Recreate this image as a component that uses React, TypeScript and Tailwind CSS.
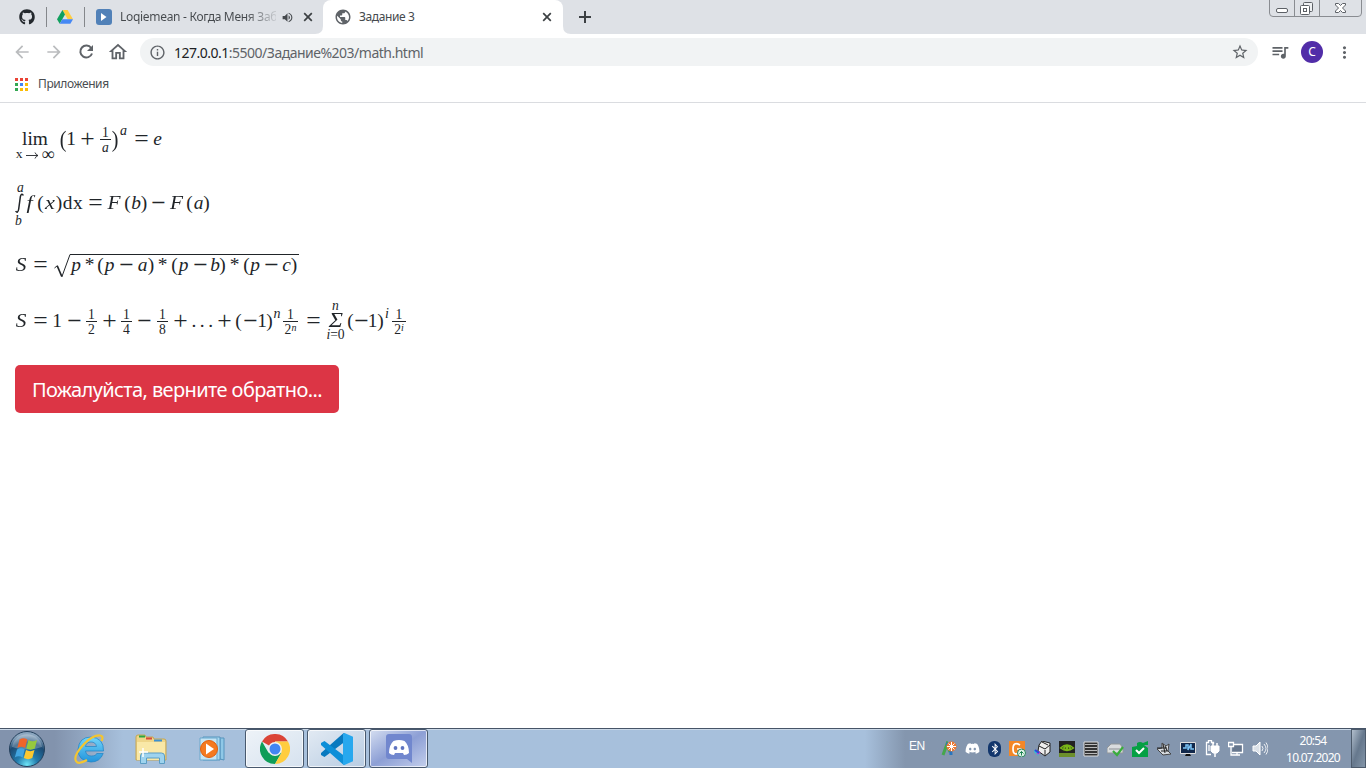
import React from "react";
import {
  MdArrowBack,
  MdArrowForward,
  MdOutlineHome,
  MdInfoOutline,
  MdStarBorder,
  MdQueueMusic,
  MdMoreVert,
  MdPublic,
  MdVolumeUp,
} from "react-icons/md";
import { FaGithub, FaDiscord, FaBluetoothB } from "react-icons/fa";

type CellProps = { c: string; children?: React.ReactNode };

/* ---------- Browser chrome ---------- */

function DriveLogo() {
  return (
    <svg width="16" height="14" viewBox="0 0 16 14">
      <path d="M5.4 0h5.2L16 9.2h-5.3z" fill="#ffcd40" />
      <path d="M5.4 0L8 4.6 2.7 13.8 0 9.2z" fill="#11a05e" />
      <path d="M5.3 9.2H16l-2.6 4.6H2.7z" fill="#4688f4" />
    </svg>
  );
}

function CloseIcon({ c }: CellProps) {
  return (
    <svg className={"shrink-0 " + c} width="14" height="14" viewBox="0 0 14 14" fill="none" stroke="#3c4043" strokeWidth="1.700">
      <path d="M3.200 3.200l7.600 7.600M10.800 3.200l-7.600 7.600" />
    </svg>
  );
}

function WindowButtons() {
  return (
    <svg className="ml-auto mr-[4px] self-start" width="93" height="17" viewBox="0 0 93 17" fill="none">
      <path d="M.5 0v13q0 3.500 3.500 3.500h85q3.500 0 3.500-3.500V0M25.500 0v16.500M50.500 0v16.500" stroke="#898c91" />
      <rect x="7.500" y="8.500" width="11" height="4" rx="1.500" fill="#fff" stroke="#5c6066" />
      <rect x="34.500" y="2.500" width="9" height="9" rx="1" fill="#eef0f2" stroke="#5c6066" />
      <rect x="31.500" y="5.500" width="9" height="9" rx="1" fill="#fff" stroke="#5c6066" />
      <rect x="34.500" y="8.500" width="3" height="3" stroke="#5c6066" />
      <path
        d="M66.500 3.500h3l2 2 2-2h3v1.500l-3 3 3 3v1.500h-3l-2-2-2 2h-3V11l3-3-3-3z"
        fill="#fff"
        stroke="#5c6066"
      />
    </svg>
  );
}

function TabStrip() {
  return (
    <div className="flex h-[34px] items-center bg-[#dee1e6] text-[12px] text-[#45494d]">
      <FaGithub className="ml-[19px] size-[16px] shrink-0 text-[#24292e]" />
      <div className="ml-[11px] h-[20px] w-px bg-[#84878b]" />
      <div className="ml-[10px]">
        <DriveLogo />
      </div>
      <div className="ml-[11px] h-[20px] w-px bg-[#84878b]" />
      <div className="ml-[11px] flex size-[16px] shrink-0 items-center justify-center rounded-[3px] bg-[#5181b8]">
        <svg width="6" height="8" viewBox="0 0 6 8">
          <path d="M0 0l5.500 4L0 8z" fill="#fff" />
        </svg>
      </div>
      <div className="ml-[8px] w-[156px] shrink-0 bg-linear-to-r from-[#45494d] from-80% to-[#45494d22] bg-clip-text tracking-[-0.3px] whitespace-nowrap text-transparent">
        Loqiemean - Когда Меня Заб
      </div>
      <MdVolumeUp className="ml-[5px] size-[13px] shrink-0" />
      <CloseIcon c="ml-[7px]" />
      <svg className="shrink-0 self-end" width="8" height="8" viewBox="0 0 8 8">
        <path d="M8 0v8H0q8 0 8-8z" fill="#fff" />
      </svg>
      <div className="flex h-[34px] w-[240px] shrink-0 items-center rounded-t-[8px] bg-white">
        <MdPublic className="ml-[11px] size-[18px] text-[#5f6368]" />
        <span className="ml-[7px] tracking-[-0.4px]">Задание 3</span>
        <CloseIcon c="ml-auto mr-[9px]" />
      </div>
      <svg className="shrink-0 self-end" width="8" height="8" viewBox="0 0 8 8">
        <path d="M0 0v8h8Q0 8 0 0z" fill="#fff" />
      </svg>
      <svg className="ml-[8px] shrink-0" width="12" height="12" viewBox="0 0 12 12" stroke="#3c4043" strokeWidth="2">
        <path d="M6 0v12M0 6h12" />
      </svg>
      <WindowButtons />
    </div>
  );
}

function Toolbar() {
  return (
    <div className="flex h-[36px] items-center text-[#5f6368]">
      <MdArrowBack className="ml-[12px] size-[20px] text-[#babcbe]" />
      <MdArrowForward className="ml-[12px] size-[20px] text-[#babcbe]" />
      <svg className="ml-[12px]" width="20" height="20" viewBox="0 0 20 20" fill="none">
        <path d="M15.200 6A6 6 0 1 0 16 11.500" stroke="#5f6368" strokeWidth="2" />
        <path d="M17 3v6h-6z" fill="#5f6368" />
      </svg>
      <MdOutlineHome className="ml-[11px] size-[22px]" />
      <div className="ml-[11px] flex h-[28px] w-[1118px] items-center rounded-full bg-[#f1f3f4]">
        <MdInfoOutline className="ml-[9px] size-[17px]" />
        <span className="ml-[8px] text-[14px] tracking-[-0.5px] whitespace-nowrap">
          <span className="text-[#202124]">127.0.0.1</span>:5500/Задание%203/math.html
        </span>
        <MdStarBorder className="ml-auto mr-[9px] size-[18px]" />
      </div>
      <MdQueueMusic className="ml-[12px] size-[20px]" />
      <div className="ml-[11px] flex size-[22px] items-center justify-center rounded-full bg-[#512da8] text-[12px] text-white">
        C
      </div>
      <MdMoreVert className="ml-[12px] size-[19px]" />
    </div>
  );
}

function AppsGrid() {
  const colors = ["#ea4335", "#ea4335", "#ea4335", "#34a853", "#4285f4", "#fbbc05", "#34a853", "#fbbc05", "#fbbc05"];
  return (
    <svg width="13" height="13" viewBox="0 0 13 13">
      {colors.map((color, i) => (
        <rect key={i} x={(i % 3) * 5} y={Math.floor(i / 3) * 5} width="3" height="3" fill={color} />
      ))}
    </svg>
  );
}

/* ---------- Formulas ---------- */

function T({ c, children }: CellProps) {
  return <span className={"flex h-[24px] shrink-0 justify-center leading-[24px] whitespace-pre " + c}>{children}</span>;
}

function Op({ c, children }: CellProps) {
  return (
    <T c={c}>
      <span className="translate-y-[0.5px] scale-[1.32]">{children}</span>
    </T>
  );
}

function Frac({ c, num, den }: { c: string; num: React.ReactNode; den: React.ReactNode }) {
  return (
    <span className={"flex shrink-0 flex-col items-center text-[13.6px] leading-[13px] " + c}>
      <span className="h-[12px] leading-[11px]">{num}</span>
      <span className="h-px w-full bg-[#212529]" />
      <span className="h-[13px] leading-[15px]">{den}</span>
    </span>
  );
}

function Sup({ c, children }: CellProps) {
  return <span className={"-mt-[3px] flex shrink-0 justify-center text-[14px] leading-[16px] italic " + c}>{children}</span>;
}

function Formulas() {
  return (
    <div className="flex flex-col pl-[15px] font-['Liberation_Serif',serif] text-[19.4px] text-[#212529]">
      <div className="mt-[24px] flex h-[54px] items-start">
        <span className="flex w-[40px] flex-col items-center">
          <T c="w-[26px]">lim</T>
          <span className="-mt-[2px] flex h-[10px] items-center text-[13.5px] leading-[10px]">
            <span>x</span>
            <svg className="mr-[2px] ml-[4px] mt-[3px]" width="13" height="7" viewBox="0 0 13 7" fill="none" stroke="#212529">
              <path d="M0 3.500h12M9 .5q1 2.500 3 3-2 .5-3 3" strokeWidth=".9" />
            </svg>
            <span className="text-[18px]">∞</span>
          </span>
        </span>
        <T c="ml-[4px] w-[8px] scale-y-[1.2] text-[20px]">(</T>
        <T c="-ml-px w-[10px]">1</T>
        <Op c="ml-[2px] w-[19px]">+</Op>
        <Frac c="ml-[3px] w-[11px]" num="1" den={<i>a</i>} />
        <T c="w-[8px] scale-y-[1.2] text-[20px]">)</T>
        <Sup c="-mt-[4px] w-[9px]">a</Sup>
        <Op c="ml-[5px] w-[16px]">=</Op>
        <T c="ml-[3px] w-[11px] italic">e</T>
      </div>

      <div className="flex h-[62px] items-start pt-[3px]">
        <span className="flex h-[44px] w-[9px] flex-col items-center italic">
          <span className="ml-[2px] h-[9px] text-[13.6px] leading-[8px]">a</span>
          <svg width="9" height="20" viewBox="0 0 9 20" fill="none" stroke="#212529">
            <path d="M8.300 2.500C7.500.5 6 .7 5.400 3.500L3.700 16c-.5 3.500-2 3.900-3 2" strokeWidth="1.500" />
          </svg>
          <span className="mt-[2px] mr-[2px] text-[13.6px] leading-[12px]">b</span>
        </span>
        <span className="mt-[7px] flex">
          <T c="w-[11px] scale-x-[1.15] italic">f</T>
          <T c="ml-[2px] w-[7px]">(</T>
          <T c="w-[12px] scale-x-[1.15] italic">x</T>
          <T c="w-[6px]">)</T>
          <T c="w-[22px] tracking-[0.6px]">dx</T>
          <Op c="ml-[3px] w-[16px]">=</Op>
          <T c="ml-[3px] w-[16px] scale-x-110 italic">F</T>
          <T c="ml-[2px] w-[7px]">(</T>
          <T c="w-[10px] italic">b</T>
          <T c="w-[6px]">)</T>
          <Op c="ml-[4px] w-[15px]">−</Op>
          <T c="ml-[3px] w-[15px] scale-x-110 italic">F</T>
          <T c="ml-[2px] w-[7px]">(</T>
          <T c="w-[11px] italic">a</T>
          <T c="w-[5px]">)</T>
        </span>
      </div>

      <div className="flex h-[56px] items-start pt-[10px]">
        <T c="w-[12px] scale-x-110 italic">S</T>
        <Op c="ml-[5px] w-[16px]">=</Op>
        <svg className="mt-px ml-[6px] shrink-0" width="17" height="24" viewBox="0 0 17 24" fill="none" stroke="#212529">
          <path d="M.5 14l3-2.500" />
          <path d="M3.300 12l4.500 10.500" strokeWidth="1.700" />
          <path d="M7.800 23L16 .5h1" />
        </svg>
        <span className="mt-px flex h-[24px] w-[228px] border-t border-[#212529]">
          <span className="-mt-[2px] flex">
            <T c="w-[10px] italic">p</T>
            <T c="ml-[3px] w-[11px]">*</T>
            <T c="ml-[2px] w-[7px]">(</T>
            <T c="w-[11px] italic">p</T>
            <Op c="ml-[4px] w-[15px]">−</Op>
            <T c="ml-[3px] w-[11px] italic">a</T>
            <T c="w-[6px]">)</T>
            <T c="ml-[3px] w-[11px]">*</T>
            <T c="ml-[3px] w-[7px]">(</T>
            <T c="w-[11px] italic">p</T>
            <Op c="ml-[4px] w-[15px]">−</Op>
            <T c="ml-[3px] w-[8px] italic">b</T>
            <T c="w-[7px]">)</T>
            <T c="ml-[3px] w-[11px]">*</T>
            <T c="ml-[3px] w-[7px]">(</T>
            <T c="w-[10px] italic">p</T>
            <Op c="ml-[4px] w-[15px]">−</Op>
            <T c="ml-[3px] w-[9px] italic">c</T>
            <T c="w-[6px]">)</T>
          </span>
        </span>
      </div>

      <div className="flex h-[66px] items-start pt-[10px]">
        <T c="w-[12px] scale-x-110 italic">S</T>
        <Op c="ml-[5px] w-[16px]">=</Op>
        <T c="ml-[4px] w-[10px]">1</T>
        <Op c="ml-[4px] w-[16px]">−</Op>
        <Frac c="ml-[4px] w-[11px]" num="1" den="2" />
        <Op c="ml-[3px] w-[18px]">+</Op>
        <Frac c="ml-[3px] w-[11px]" num="1" den="4" />
        <Op c="ml-[3px] w-[18px]">−</Op>
        <Frac c="ml-[4px] w-[11px]" num="1" den="8" />
        <Op c="ml-[3px] w-[18px]">+</Op>
        <T c="w-[28px] pl-[2px] tracking-[3.500px]">...</T>
        <Op c="-ml-[2px] w-[18px]">+</Op>
        <T c="ml-[2px] w-[7px]">(</T>
        <Op c="w-[16px]">−</Op>
        <T c="w-[8px]">1</T>
        <T c="w-[7px]">)</T>
        <Sup c="-ml-px w-[10px]">n</Sup>
        <Frac c="ml-px w-[15px]" num="1" den={<>2<i className="relative -top-[3px] text-[10px]">n</i></>} />
        <Op c="ml-[6px] w-[18px]">=</Op>
        <span className="-mt-[9px] ml-[2px] flex w-[23px] flex-col items-center italic">
          <span className="h-[11px] text-[13.6px] leading-[12px]">n</span>
          <span className="h-[16px] scale-x-[1.2] text-[20px] leading-[18px]">Σ</span>
          <span className="mt-[3px] text-[13.6px] leading-[10px] whitespace-nowrap">
            i<span className="not-italic">=0</span>
          </span>
        </span>
        <T c="w-[7px]">(</T>
        <Op c="w-[14px]">−</Op>
        <T c="w-[9px]">1</T>
        <T c="w-[7px]">)</T>
        <Sup c="w-[6px]">i</Sup>
        <Frac c="ml-[2px] w-[14px]" num="1" den={<>2<i className="relative -top-[3px] text-[10px]">i</i></>} />
      </div>
    </div>
  );
}

/* ---------- Taskbar ---------- */

function StartOrb() {
  return (
    <svg width="38" height="38" viewBox="0 0 38 38">
      <defs>
        <radialGradient id="orb" cx=".5" cy=".95" r=".85">
          <stop offset="0" stopColor="#6fe5f7" />
          <stop offset=".35" stopColor="#237cad" />
          <stop offset=".75" stopColor="#1c4a73" />
          <stop offset="1" stopColor="#8ba6bf" />
        </radialGradient>
      </defs>
      <circle cx="19" cy="19" r="17.500" fill="url(#orb)" stroke="#24405c" />
      <path d="M4 17a15.200 15.200 0 0130 0q-15 5-30 0z" fill="#fff" opacity=".25" />
      <path d="M11.500 9.500q4-2.500 7.800 0l-2.200 8.500q-4-2.300-7.800 0z" fill="#f0642a" />
      <path d="M20.500 10q4 2.500 8.500 0l-2.200 8.500q-4.200 2.300-8.500 0z" fill="#96c93e" />
      <path d="M9 19.400q4-2.300 7.800 0l-2.200 8q-4-2.300-7.800 0z" fill="#42a5e0" />
      <path d="M18 20q4.200 2.300 8.500 0l-2.200 8q-4.200 2.300-8.500 0z" fill="#fdc82f" />
    </svg>
  );
}

function ExplorerLogo() {
  return (
    <svg width="32" height="32" viewBox="0 0 32 32" fill="none">
      <defs>
        <linearGradient id="ie" x2="0" y2="1">
          <stop stopColor="#72d5fa" />
          <stop offset="1" stopColor="#2394dc" />
        </linearGradient>
      </defs>
      <path
        d="M29.500 18H11.500q.8 5 5.700 5t5.500-2.500h6.500Q26 29 17 29 4 28 4 16.500 5 4 17 4q13 1 12.500 14zm-18-4.500h11q-.8-4.500-5.500-4.500t-5.500 4.500z"
        fill="url(#ie)"
        stroke="#1e82c4"
        strokeWidth=".7"
      />
      <path d="M27.500 8Q30 3 26 2.500 19 2 10 11-1 23 2 28q2 4 11-1" stroke="#f4c52f" strokeWidth="2.200" />
    </svg>
  );
}

function FolderLogo() {
  return (
    <svg width="34" height="32" viewBox="0 0 34 32">
      <path d="M2 4q0-2 2-2h7l1 2h7l1 2h10q2 0 2 2v19H2z" fill="#efd689" stroke="#c5a653" />
      <path d="M5 2.500h6v2H5z" fill="#29a745" />
      <path d="M12 4.500h6v2h-6z" fill="#d94a3b" />
      <path d="M20 6.500h8v2h-8z" fill="#3c92d2" />
      <path d="M3 9h28v18H3z" fill="#f9e8a7" />
      <path d="M6.500 30.500V23q0-3 3-3h18q3 0 3 3v7.500h-5V25h-13v5.500z" fill="#9ed3ee" stroke="#5a9dc4" />
      <path d="M9 15v9M5 19h9" stroke="#fff" strokeWidth="1.500" />
    </svg>
  );
}

function PlayerLogo() {
  return (
    <svg width="28" height="28" viewBox="0 0 28 28">
      <path d="M8 3h18v22l-4-1V4z" fill="#8fc8e7" stroke="#5694bd" />
      <path d="M5 2h17v23H5z" fill="#a8d8ef" stroke="#5694bd" />
      <path d="M2 3h17v22H2z" fill="#c5e5f4" stroke="#6aa8cd" />
      <circle cx="11" cy="14" r="8.500" fill="#f47a20" stroke="#e0600e" />
      <path d="M8 8.500l8 5.500-8 5.500z" fill="#fff" />
    </svg>
  );
}

function ChromeLogo() {
  return (
    <svg width="30" height="30" viewBox="0 0 30 30">
      <path d="M15 15L2 7.500A15 15 0 0128 7.500H15z" fill="#db4437" />
      <path d="M15 15l6.500 3.800L15 30A15 15 0 012 7.500l6.500 11.300z" fill="#0f9d58" />
      <path d="M15 7.500h13A15 15 0 0115 30l6.500-11.200z" fill="#ffcd40" />
      <circle cx="15" cy="15" r="7" fill="#f1f1f1" />
      <circle cx="15" cy="15" r="5.500" fill="#4285f4" />
    </svg>
  );
}

function CodeLogo() {
  return (
    <svg width="32" height="32" viewBox="0 0 32 32">
      <path d="M23.500 9L3.500 24 0 22v-2L21.500 1q1-1 2-1z" fill="#0879bf" />
      <path d="M23.500 23L3.500 8 0 10v2l21.500 19q1 1 2 1z" fill="#0d8fd8" />
      <path d="M23.500 0L32 3.800v24.400L23.500 32l-1.500-1V1z" fill="#27a8ee" />
    </svg>
  );
}

function DiscordLogo() {
  return (
    <svg width="26" height="29" viewBox="0 0 26 29">
      <path d="M3 0h20q3 0 3 3v26l-5-4H3q-3 0-3-3V3q0-3 3-3z" fill="#7187ce" />
      <path d="M7.500 7q5.500-2 11 0 4.500 4 4.500 12-2 2-5 2l-1-2H9l-1 2q-3 0-5-2Q3 11 7.500 7z" fill="#fff" />
      <circle cx="9.500" cy="14" r="1.900" fill="#5f74c0" />
      <circle cx="16.500" cy="14" r="1.900" fill="#5f74c0" />
    </svg>
  );
}

function TaskButton({ c, children }: CellProps) {
  return (
    <div className={"flex h-[39px] w-[59px] shrink-0 items-center justify-center rounded-[3px] border border-[#48596e] shadow-[inset_0_0_0_1px_#ffffffb0] " + c}>
      {children}
    </div>
  );
}

function TrayIcons() {
  return (
    <div className="ml-[16px] flex w-[327px] items-center justify-between">
      <svg width="16" height="16" viewBox="0 0 16 16" fill="none">
        <path d="M2 14L6 3l3 8" stroke="#45a64c" strokeWidth="3" />
        <path d="M5 3q5 0 5 11" stroke="#2975bd" strokeWidth="3" />
        <circle cx="10.500" cy="5.500" r="5" fill="#ed7933" />
        <path d="M10.500 1v9M6 5.500h9M7.500 2.500l6 6m0-6l-6 6" stroke="#fff" />
      </svg>
      <FaDiscord className="size-[15px] text-white" />
      <span className="flex h-[16px] w-[13px] items-center justify-center rounded-[6px] bg-[#12366c] text-white">
        <FaBluetoothB className="size-[12px]" />
      </span>
      <svg width="17" height="16" viewBox="0 0 17 16" fill="none">
        <path d="M0 0h16v15H0z" fill="#f38727" />
        <path d="M11 4Q4 0 4 8t8 3V8H8" stroke="#fff" strokeWidth="1.700" />
        <circle cx="12.500" cy="12" r="4" fill="#dff2e7" stroke="#28835c" />
        <path d="M12.500 14.500v-4m-2 2l2-2 2 2" stroke="#198250" />
      </svg>
      <svg width="17" height="16" viewBox="0 0 17 16" fill="none" stroke="#222">
        <path d="M5 4l3-4 8 2v9l-5 4-7-5z" fill="#ededed" />
        <path d="M5 5l6 3 5-4M8 1l6 3M11 9v5" />
        <path d="M0 9l6 2-2 4-4-4z" fill="#39bad6" stroke="none" />
        <path d="M3 13l3-2" stroke="#d93dbf" strokeWidth="2" />
        <path d="M1 9l4 3" stroke="#2b45dd" strokeWidth="2" />
      </svg>
      <svg width="16" height="16" viewBox="0 0 16 16" fill="none">
        <path d="M0 0h16v16H0z" fill="#222" />
        <path d="M0 12h16v4H0z" fill="#6b8f2c" />
        <path d="M1.500 7Q8 1 14.500 7 8 12 1.500 7zm3 0q4-3.500 7 0-3 3.500-7 0z" stroke="#79b618" strokeWidth="1.300" />
        <circle cx="8" cy="7" r="1.300" fill="#79b618" />
      </svg>
      <svg width="16" height="16" viewBox="0 0 16 16">
        <path d="M1 1h14v14H1z" fill="#333" stroke="#ddd" />
        <path d="M2 3.500h12m-12 3h12m-12 3h12m-12 3h12" stroke="#bbb" />
      </svg>
      <svg width="17" height="16" viewBox="0 0 17 16" fill="none">
        <path d="M0 7l4-4h9l3 4v5H0z" fill="#d9dcde" stroke="#919699" />
        <path d="M2 8h11" stroke="#8c9194" />
        <path d="M6 10l4 4 6-8" stroke="#39ad3c" strokeWidth="2.200" />
      </svg>
      <svg width="16" height="16" viewBox="0 0 16 16" fill="none">
        <path d="M0 6l5-1V2q3-2 6 0l5-2v4h-4l4 3v9H0z" fill="#05a044" />
        <path d="M4 9l3 3 5-5" stroke="#fff" strokeWidth="2" />
      </svg>
      <svg width="16" height="16" viewBox="0 0 16 16" fill="none">
        <path d="M1 8l5-1V2l4 3 3-2-1 7 3 3-8 1z" fill="#d8dce0" stroke="#444" />
        <path d="M7 3l2 9M1 7h10M5 10h7M9 5l2 5" stroke="#222" />
      </svg>
      <svg width="17" height="16" viewBox="0 0 17 16">
        <path d="M.5 1.500h15v11H.5z" fill="#11284b" stroke="#ddd" />
        <path d="M3 7h3V4h2v5l3-6v5h3" fill="none" stroke="#7ac2f4" strokeWidth="1.500" />
        <path d="M6 13h4l1 2H5z" fill="#111" />
      </svg>
      <svg width="15" height="17" viewBox="0 0 15 17" fill="none" stroke="#fff">
        <path d="M6 14.500H1.500v-12h2v-2h3v2h2V4M4 5v6" strokeWidth="1.300" />
        <path d="M6 6h8v5l-2 2H8l-2-2z" fill="#fff" />
        <path d="M8 3v4m4-4v4m-2 6v4" strokeWidth="1.500" />
      </svg>
      <svg width="16" height="16" viewBox="0 0 16 16" fill="none" stroke="#fff">
        <path d="M5 3.500h9.500v8H4" fill="#66778e" strokeWidth="1.300" />
        <path d="M.5 1.500h5v4h-5zM3 6v8h9M9 12v2" strokeWidth="1.300" />
      </svg>
      <svg width="16" height="15" viewBox="0 0 16 15" fill="none" stroke="#fff">
        <path d="M1 5h3l4-4v13l-4-4H1z" fill="#dbe1e8" />
        <path d="M10 5q2 2.500 0 5M12 3q4 4.500 0 9M14 1.500q4 6 0 12" opacity=".85" />
      </svg>
    </div>
  );
}

function Taskbar() {
  return (
    <div className="flex h-[40px] items-center border-t border-[#465467] bg-linear-to-r from-[#8293ad] from-4% via-[#a7c0dc] via-9% to-[#a7c0dc] shadow-[inset_0_1px_0_#cbd9e8]">
      <div className="ml-[8px] shrink-0">
        <StartOrb />
      </div>
      <div className="ml-[28px] shrink-0">
        <ExplorerLogo />
      </div>
      <div className="ml-[28px] shrink-0">
        <FolderLogo />
      </div>
      <div className="ml-[30px] shrink-0">
        <PlayerLogo />
      </div>
      <TaskButton c="ml-[19px] bg-linear-to-br from-[#eef3f8] to-[#d6e2ef]">
        <ChromeLogo />
      </TaskButton>
      <TaskButton c="ml-[3px] bg-linear-to-br from-[#e2eaf3] to-[#b8cce2]">
        <CodeLogo />
      </TaskButton>
      <TaskButton c="ml-[3px] bg-linear-to-br from-[#d5def0] via-[#8d9fd5] to-[#c4cfec]">
        <DiscordLogo />
      </TaskButton>
      <div className="ml-auto flex h-full w-[501px] shrink-0 items-center bg-linear-to-r from-[#a7c0dc] to-[#8496ae] to-8% text-[12px] text-white shadow-[inset_0_1px_0_#cbd9e8]">
        <span className="mb-[5px] ml-[44px] w-[16px] font-['Liberation_Sans',sans-serif] text-[12px] tracking-[-0.6px]">EN</span>
        <TrayIcons />
        <div className="ml-[12px] w-[66px] text-center text-[12px] leading-[17px] tracking-[-0.75px]">
          <div>20:54</div>
          <div>10.07.2020</div>
        </div>
        <div className="ml-auto h-full w-[15px] border border-[#4d5b6c] bg-linear-to-br from-[#b2bfcd] via-[#66788d] to-[#8496a9]" />
      </div>
    </div>
  );
}

export default function App() {
  return (
    <div className="flex h-screen w-screen flex-col overflow-hidden bg-white font-['Noto_Sans',sans-serif]">
      <TabStrip />
      <Toolbar />
      <div className="flex h-[33px] items-center border-b border-[#dadce0] pb-[4px] text-[12px] tracking-[-0.4px] text-[#4a4d51]">
        <div className="ml-[15px]">
          <AppsGrid />
        </div>
        <span className="ml-[10px]">Приложения</span>
      </div>
      <main className="flex flex-1 flex-col">
        <Formulas />
        <button className="ml-[15px] flex h-[48px] w-[324px] items-center justify-center rounded-[5px] bg-[#dc3545] pt-[2px] text-[20px] tracking-[-0.6px] whitespace-nowrap text-white">
          Пожалуйста, верните обратно...
        </button>
      </main>
      <Taskbar />
    </div>
  );
}
